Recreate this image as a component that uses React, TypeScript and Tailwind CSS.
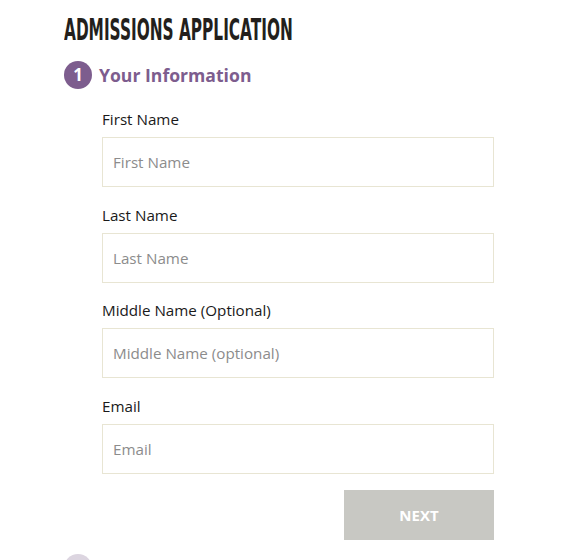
import React from 'react';

const fields = [
  { label: 'First Name', placeholder: 'First Name' },
  { label: 'Last Name', placeholder: 'Last Name' },
  { label: 'Middle Name (Optional)', placeholder: 'Middle Name (optional)' },
  { label: 'Email', placeholder: 'Email' },
];

function Field({ label, placeholder }: { label: string; placeholder: string }) {
  return (
    <div className="flex flex-col">
      <label className="text-[15.2px] leading-5 text-[#1a1a1a]">{label}</label>
      <input
        type="text"
        placeholder={placeholder}
        className="mt-2 h-[50px] w-[392px] border border-[#e8e5d3] bg-white px-[10px] text-[15.2px] text-[#333] outline-none placeholder:text-[#8c8c8c]"
      />
    </div>
  );
}

export default function App() {
  return (
    <div
      className="h-[560px] w-[578px] overflow-hidden bg-white pl-[64px] pt-[14px]"
      style={{ fontFamily: '"Open Sans", "Liberation Sans", sans-serif' }}
    >
      <h1
        className="origin-left scale-x-[0.495] whitespace-nowrap text-[31px] font-bold uppercase leading-[30px] text-[#231f1c]"
        style={{ fontFamily: '"DejaVu Sans", sans-serif' }}
      >
        Admissions Application
      </h1>
      <div className="mt-[17px] flex items-center gap-[7px]">
        <div className="flex h-[28px] w-[28px] items-center justify-center rounded-full bg-[#7d5d8e] text-[17px] font-bold text-white">
          1
        </div>
        <h2 className="text-[17.6px] font-bold text-[#7d5d8e]">Your Information</h2>
      </div>
      <div className="ml-[38px] mt-[20px] flex flex-col gap-[17.6px]">
        {fields.map((f) => (
          <Field key={f.label} label={f.label} placeholder={f.placeholder} />
        ))}
      </div>
      <div className="ml-[38px] mt-[16px] flex w-[392px] justify-end">
        <button className="h-[50px] w-[150px] bg-[#c8c8c3] text-[15px] font-bold text-white">NEXT</button>
      </div>
      <div className="mt-[14px] h-[28px] w-[28px] rounded-full bg-[#dcd5e0]" />
    </div>
  );
}
